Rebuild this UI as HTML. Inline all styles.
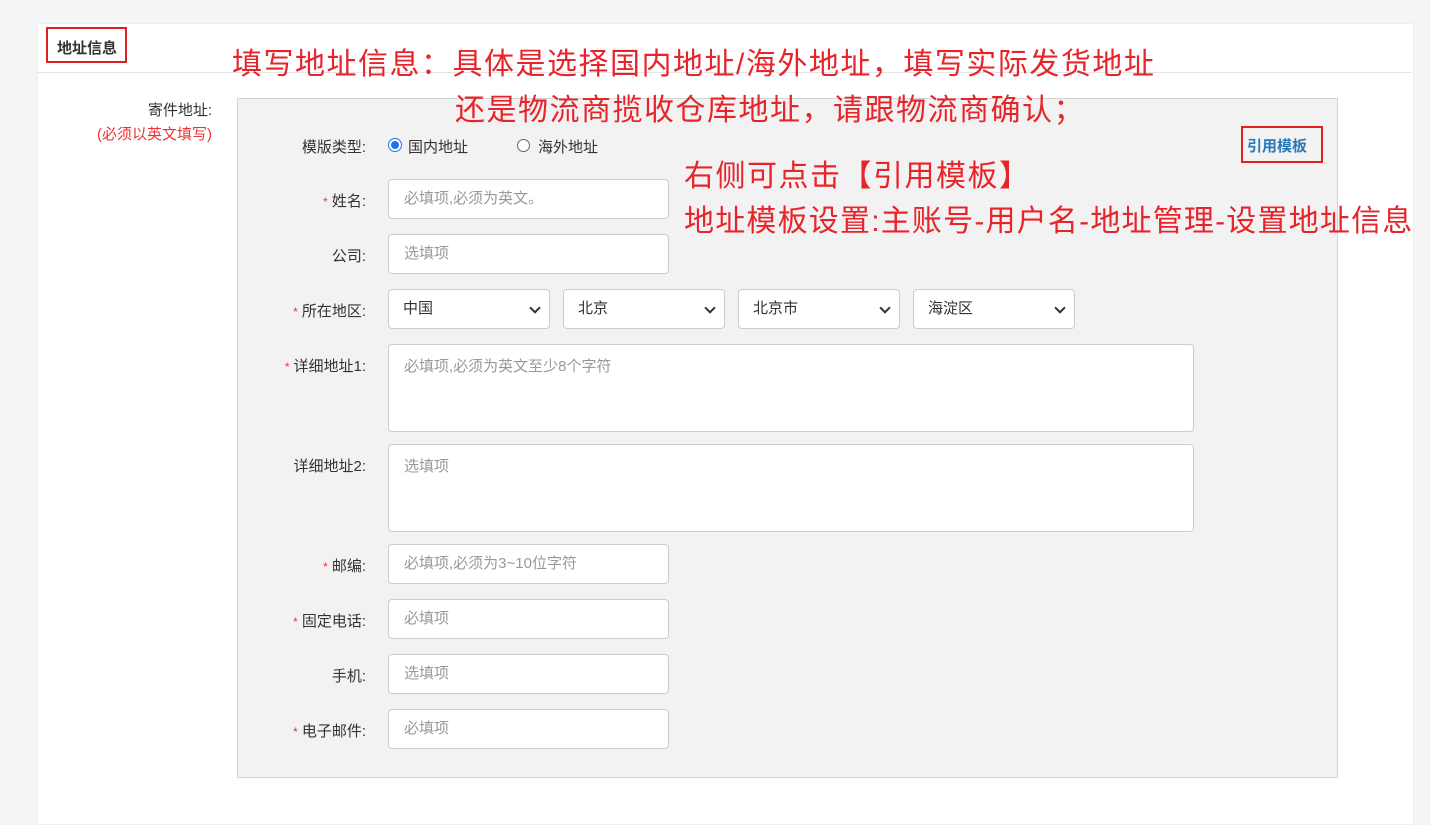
<!DOCTYPE html>
<html><head><meta charset="utf-8"><style>
body{margin:0;width:1430px;height:800px;background:#f5f5f5;font-family:"Liberation Sans","Noto Sans CJK SC",sans-serif;font-size:15px;color:#333;position:relative;overflow:hidden}
.a{position:absolute}
.card{left:37px;top:23px;width:1375px;height:800px;background:#fff;border:1px solid #eee}
.hline{left:37px;top:72px;width:1375px;height:1px;background:#e5e5e5}
.gbox{left:237px;top:98px;width:1099px;height:678px;background:#f2f2f2;border:1px solid #d4d4d4}
.lbl{width:200px;left:166px;text-align:right;font-size:15px;color:#333}
.lbl i{color:#e33;font-style:normal;font-size:12px;margin-right:4px}
.in{background:#fff;border:1px solid #ccc;border-radius:4px;box-sizing:border-box;color:#999;padding:0 15px;font-size:15px}
.sel{color:#333}
.sel:after{content:"";position:absolute;right:10px;top:14px;width:6px;height:6px;border-right:2px solid #333;border-bottom:2px solid #333;transform:rotate(45deg)}
.red{color:#e8242b;font-size:30px;white-space:nowrap;letter-spacing:1.5px}
</style></head><body>
<div class="a card"></div>
<div class="a hline"></div>
<div class="a" style="left:46px;top:27px;width:81px;height:36px;border:2px solid #e02020;box-sizing:border-box"></div>
<div class="a" style="left:57px;top:37px;font-size:15px;font-weight:bold;color:#333">地址信息</div>
<div class="a" style="left:90px;top:99px;width:122px;text-align:right">寄件地址:</div>
<div class="a" style="left:50px;top:123px;width:162px;text-align:right;color:#e33">(必须以英文填写)</div>
<div class="a gbox"></div>
<div class="a lbl" style="top:136px">模版类型:</div>
<div class="a" style="left:388px;top:138px;width:14px;height:14px;border-radius:50%;border:1px solid #1a73e8;box-sizing:border-box;background:#fff"><div style="margin:2px;width:8px;height:8px;border-radius:50%;background:#1a73e8"></div></div>
<div class="a" style="left:408px;top:136px">国内地址</div>
<div class="a" style="left:517px;top:139px;width:13px;height:13px;border-radius:50%;border:1px solid #666;box-sizing:border-box;background:#fff"></div>
<div class="a" style="left:538px;top:136px">海外地址</div>
<div class="a" style="left:1241px;top:126px;width:82px;height:37px;border:2px solid #e02020;box-sizing:border-box"></div>
<div class="a" style="left:1247px;top:135px;color:#2a7ab8;font-weight:bold">引用模板</div>

<div class="a lbl" style="top:190px"><i>*</i>姓名:</div>
<div class="a in" style="left:388px;top:179px;width:281px;height:40px;line-height:38px">必填项,必须为英文。</div>
<div class="a lbl" style="top:245px">公司:</div>
<div class="a in" style="left:388px;top:234px;width:281px;height:40px;line-height:38px">选填项</div>
<div class="a lbl" style="top:300px"><i>*</i>所在地区:</div>
<div class="a in sel" style="left:388px;top:289px;width:162px;height:40px;line-height:38px;padding-left:14px">中国</div>
<div class="a in sel" style="left:563px;top:289px;width:162px;height:40px;line-height:38px;padding-left:14px">北京</div>
<div class="a in sel" style="left:738px;top:289px;width:162px;height:40px;line-height:38px;padding-left:14px">北京市</div>
<div class="a in sel" style="left:913px;top:289px;width:162px;height:40px;line-height:38px;padding-left:14px">海淀区</div>
<div class="a lbl" style="top:355px"><i>*</i>详细地址1:</div>
<div class="a in" style="left:388px;top:344px;width:806px;height:88px;padding-top:10px">必填项,必须为英文至少8个字符</div>
<div class="a lbl" style="top:455px">详细地址2:</div>
<div class="a in" style="left:388px;top:444px;width:806px;height:88px;padding-top:10px">选填项</div>
<div class="a lbl" style="top:555px"><i>*</i>邮编:</div>
<div class="a in" style="left:388px;top:544px;width:281px;height:40px;line-height:38px">必填项,必须为3~10位字符</div>
<div class="a lbl" style="top:610px"><i>*</i>固定电话:</div>
<div class="a in" style="left:388px;top:599px;width:281px;height:40px;line-height:38px">必填项</div>
<div class="a lbl" style="top:665px">手机:</div>
<div class="a in" style="left:388px;top:654px;width:281px;height:40px;line-height:38px">选填项</div>
<div class="a lbl" style="top:720px"><i>*</i>电子邮件:</div>
<div class="a in" style="left:388px;top:709px;width:281px;height:40px;line-height:38px">必填项</div>

<div class="a red" style="left:232px;top:39px">填写地址信息：具体是选择国内地址/海外地址，填写实际发货地址</div>
<div class="a red" style="left:455px;top:85px">还是物流商揽收仓库地址，请跟物流商确认；</div>
<div class="a red" style="left:684px;top:151px">右侧可点击【引用模板】</div>
<div class="a red" style="left:684px;top:196px;letter-spacing:1.2px">地址模板设置:主账号-用户名-地址管理-设置地址信息</div>
</body></html>
